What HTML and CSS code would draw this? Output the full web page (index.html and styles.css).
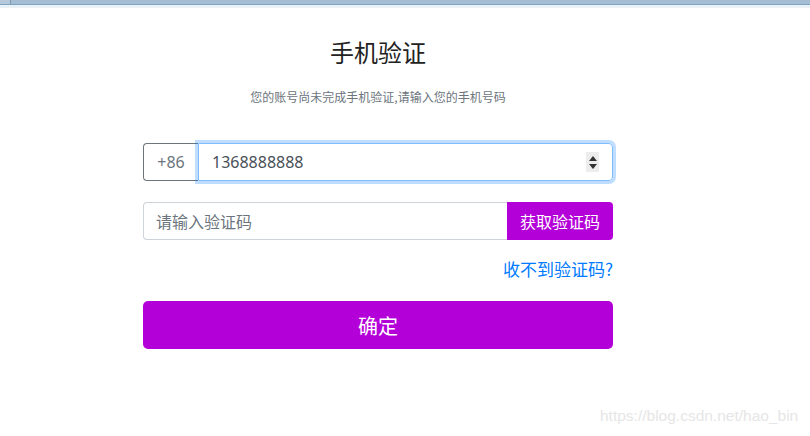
FILE: index.html
```html
<!DOCTYPE html>
<html lang="zh">
<head>
<meta charset="utf-8">
<title>手机验证</title>
<link rel="stylesheet" href="styles.css">
</head>
<body>
<div class="topbar"><div class="tab"></div></div>
<div class="topline"></div>
<main class="box">
  <h1 class="title">手机验证</h1>
  <p class="sub">您的账号尚未完成手机验证,请输入您的手机号码</p>
  <div class="group phone">
    <span class="addon">+86</span>
    <div class="field focus">
      <span class="val">1368888888</span>
      <span class="spin"><i class="up"></i><i class="down"></i></span>
    </div>
  </div>
  <div class="group code">
    <div class="field plain"><span class="ph">请输入验证码</span></div>
    <button class="getcode">获取验证码</button>
  </div>
  <div class="linkrow"><a class="link">收不到验证码?</a></div>
  <button class="submit">确定</button>
</main>
<div class="wm">https://blog.csdn.net/hao_bin</div>
</body>
</html>
```
FILE: styles.css
```css
html, body { margin: 0; padding: 0; background: #fff; }
body {
  font-family: "Noto Sans", "Noto Sans CJK SC", sans-serif;
  color: #212529;
  width: 810px; height: 436px; overflow: hidden; position: relative;
}
.topbar { height: 4px; background: #a4bdd3; display: flex; }
.tab { width: 10px; background: #b5c9db; border-right: 1px solid #7d98b1; }
.topline { height: 1px; background: #7fa4c1; border-bottom: 3px solid #eaf1f7; }
.box { width: 470px; margin-left: 143px; display: flex; flex-direction: column; }
.title {
  margin: 26px 0 0; font-weight: 400; font-size: 24px; line-height: 36px;
  text-align: center; color: #222;
  font-family: "Noto Sans CJK SC", sans-serif;
}
.sub {
  margin: 18px 0 0; font-size: 12px; line-height: 18px; color: #6c757d; text-align: center;
  font-family: "Noto Sans CJK SC", sans-serif;
}
.group { display: flex; height: 38px; box-sizing: border-box; }
.phone { margin-top: 37px; }
.addon {
  width: 55px; box-sizing: border-box; border: 1px solid #6c757d; border-right: 0;
  border-radius: 4px 0 0 4px; display: flex; align-items: center; justify-content: center;
  font-size: 16px; color: #6c757d;
}
.field {
  flex: 1; box-sizing: border-box; display: flex; align-items: center;
  padding: 0 12px; font-size: 16px;
}
.focus {
  border: 1px solid #80bdff; border-radius: 0 4px 4px 0;
  box-shadow: 0 0 0 3px rgba(0,123,255,.25); padding-left: 13px; position: relative; z-index: 1;
}
.val { flex: 1; color: #495057; }
.spin {
  width: 13px; height: 20px; background: #ededed; display: flex; flex-direction: column;
  align-items: center; justify-content: center; gap: 3px; margin-right: 1px;
}
.spin i { width: 0; height: 0; border-left: 4px solid transparent; border-right: 4px solid transparent; }
.spin .up { border-bottom: 5px solid #333; }
.spin .down { border-top: 5px solid #333; }
.code { margin-top: 21px; }
.plain {
  border: 1px solid #ced4da; border-right: 0; border-radius: 4px 0 0 4px;
  font-family: "Noto Sans CJK SC", sans-serif;
}
.ph { color: #6c757d; }
.getcode {
  width: 106px; border: 0; background: #b400d8; color: #fff; font-size: 16px;
  border-radius: 0 4px 4px 0; padding: 0;
  font-family: "Noto Sans CJK SC", sans-serif;
}
.linkrow { display: flex; justify-content: flex-end; margin-top: 18px; height: 20px; align-items: center; }
.link { color: #007bff; font-size: 17px; font-family: "Noto Sans CJK SC", sans-serif; }
.submit {
  margin-top: 23px; height: 48px; border: 0; border-radius: 5px; background: #b400d8;
  color: #fff; font-size: 20px; font-family: "Noto Sans CJK SC", sans-serif;
}
.wm {
  position: absolute; left: 600px; top: 407px; font-size: 15.5px; color: #e6e6e6;
  font-family: "Liberation Sans", sans-serif;
}
```
